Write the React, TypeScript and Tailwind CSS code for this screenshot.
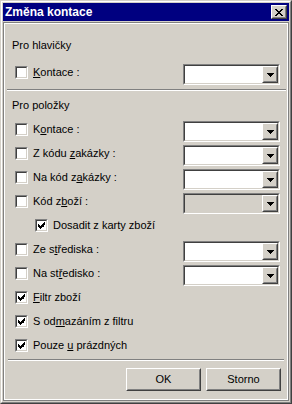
import React from "react";

function Raised({ className, children }: { className?: string; children?: React.ReactNode }) {
  return (
    <div className={"border border-t-white border-l-white border-r-[#404040] border-b-[#404040] " + (className ?? "")}>
      <div className="w-full h-full border border-t-[#d4d0c8] border-l-[#d4d0c8] border-r-[#808080] border-b-[#808080] bg-[#d4d0c8] flex items-center justify-center">
        {children}
      </div>
    </div>
  );
}

function Sunken({ className, inner, children }: { className?: string; inner?: string; children?: React.ReactNode }) {
  return (
    <div className={"border border-t-[#808080] border-l-[#808080] border-r-white border-b-white " + (className ?? "")}>
      <div className={"w-full h-full border border-t-[#404040] border-l-[#404040] border-r-[#d4d0c8] border-b-[#d4d0c8] " + (inner ?? "")}>
        {children}
      </div>
    </div>
  );
}

function CheckBox({ checked }: { checked?: boolean }) {
  return (
    <Sunken className="w-[13px] h-[13px] shrink-0" inner="bg-white flex items-center justify-center">
      {checked && (
        <svg width="7" height="7" viewBox="0 0 7 7" shapeRendering="crispEdges">
          <path
            d="M6 0h1v3h-1zM5 1h1v4h-1zM4 2h1v3h-1zM3 3h1v3h-1zM2 4h1v3h-1zM1 3h1v3h-1zM0 2h1v3h-1z"
            fill="#000"
          />
        </svg>
      )}
    </Sunken>
  );
}

function Combo({ disabled }: { disabled?: boolean }) {
  return (
    <Sunken
      className="w-[97px] h-[21px] shrink-0"
      inner={"flex justify-end " + (disabled ? "bg-[#d4d0c8]" : "bg-white")}
    >
      <Raised className="w-[16px] h-[17px]">
        <svg width="7" height="4" viewBox="0 0 7 4" shapeRendering="crispEdges">
          <path d="M0 0h7v1h-7zM1 1h5v1h-5zM2 2h3v1h-3zM3 3h1v1h-1z" fill="#000" />
        </svg>
      </Raised>
    </Sunken>
  );
}

type Row = { label: React.ReactNode; combo?: "white" | "disabled"; checked?: boolean; indent?: boolean };

const U = ({ children }: { children: React.ReactNode }) => (
  <span className="underline underline-offset-[1px] decoration-1">{children}</span>
);

const rows: Row[] = [
  { label: <>K<U>o</U>ntace :</>, combo: "white" },
  { label: <>Z kódu <U>z</U>akázky :</>, combo: "white" },
  { label: <>Na kód z<U>a</U>kázky :</>, combo: "white" },
  { label: <>Kód z<U>b</U>oží :</>, combo: "disabled" },
  { label: <>Dosadit z karty zboží</>, checked: true, indent: true },
  { label: <>Ze s<U>t</U>řediska :</>, combo: "white" },
  { label: <>Na st<U>ř</U>edisko :</>, combo: "white" },
  { label: <><U>F</U>iltr zboží</>, checked: true },
  { label: <>S od<U>m</U>azáním z filtru</>, checked: true },
  { label: <>Pouze <U>u</U> prázdných</>, checked: true },
];

function LineRow({ row }: { row: Row }) {
  return (
    <div className="flex h-[21px] items-start">
      <div className={"flex items-center gap-[5px] mt-[2px] " + (row.indent ? "ml-[30px]" : "ml-[10px]")}>
        <CheckBox checked={row.checked} />
        <span className="whitespace-nowrap">{row.label}</span>
      </div>
      {row.combo && (
        <div className="ml-auto mr-[7px]">
          <Combo disabled={row.combo === "disabled"} />
        </div>
      )}
    </div>
  );
}

export default function App() {
  return (
    <div className="w-[292px] h-[404px] bg-[#d4d0c8] font-['Liberation_Sans',Arial,sans-serif] text-[11px] leading-[13px] text-black border border-t-[#d4d0c8] border-l-[#d4d0c8] border-r-[#404040] border-b-[#404040]">
      <div className="w-full h-full border border-t-white border-l-white border-r-[#808080] border-b-[#808080] p-px flex flex-col">
        {/* Title bar */}
        <div className="h-[18px] bg-[#000080] flex items-center justify-between pl-[2px] pr-[2px] shrink-0">
          <span className="text-white font-bold text-[12px] leading-[14px]">Změna kontace</span>
          <Raised className="w-[16px] h-[14px]">
            <svg width="8" height="7" viewBox="0 0 8 7" shapeRendering="crispEdges">
              <path
                d="M0 0h2v1h-2zM6 0h2v1h-2zM1 1h2v1h-2zM5 1h2v1h-2zM2 2h4v1h-4zM3 3h2v1h-2zM2 4h4v1h-4zM1 5h2v1h-2zM5 5h2v1h-2zM0 6h2v1h-2zM6 6h2v1h-2z"
                fill="#000"
              />
            </svg>
          </Raised>
        </div>
        {/* Body */}
        <div className="mt-px flex-1 border border-[#808080]">
          <div className="w-full h-full border border-white flex flex-col">
            <div className="mt-[15px] ml-[7px]">Pro hlavičky</div>
            <div className="mt-[12px] flex h-[21px] items-start">
              <div className="flex items-center gap-[5px] mt-[2px] ml-[10px]">
                <CheckBox />
                <span>
                  <U>K</U>ontace :
                </span>
              </div>
              <div className="ml-auto mr-[7px]">
                <Combo />
              </div>
            </div>
            <div className="mt-[4px] ml-[2px] w-[279px] border-t border-t-[#808080] border-b border-b-white" />
            <div className="mt-[8px] ml-[7px]">Pro položky</div>
            <div className="mt-[9px] flex flex-col gap-[3px]">
              {rows.map((r, i) => (
                <LineRow key={i} row={r} />
              ))}
            </div>
            <div className="mt-[1px] ml-[3px] w-[276px] border-t border-t-[#808080] border-b border-b-white" />
            <div className="mt-[7px] flex justify-end gap-[5px] pr-[6px]">
              <Raised className="w-[75px] h-[23px]">
                <span>OK</span>
              </Raised>
              <Raised className="w-[75px] h-[23px]">
                <span>Storno</span>
              </Raised>
            </div>
          </div>
        </div>
      </div>
    </div>
  );
}
